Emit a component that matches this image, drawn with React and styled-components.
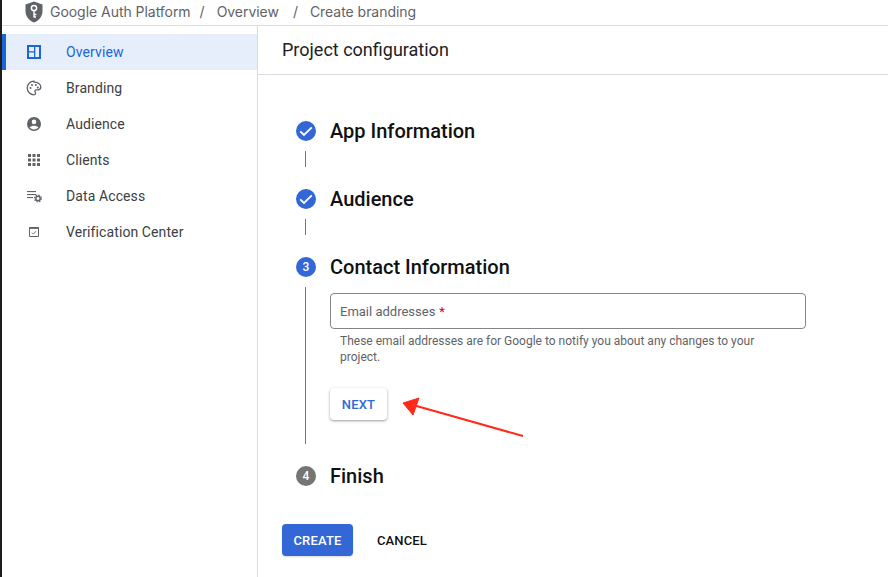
import React from "react";
import styled, { createGlobalStyle } from "styled-components";

const Global = createGlobalStyle`
  html, body { margin: 0; padding: 0; background: #fff; }
  body { font-family: Roboto, "Liberation Sans", sans-serif; color: #202124; }
`;

const Page = styled.div`
  position: relative;
  width: 888px;
  height: 577px;
  overflow: hidden;
  display: flex;
  flex-direction: column;
  background: #fff;
  border-left: 2px solid #1c1c1c;
  box-sizing: border-box;
`;

const TopBar = styled.header`
  height: 26px;
  flex: none;
  box-sizing: border-box;
  display: flex;
  align-items: center;
  padding-left: 23px;
  padding-bottom: 2px;
  border-bottom: 1px solid #dadce0;
  font-size: 14px;
  color: #5f6368;
  font-family: Inter, Roboto, sans-serif;
  letter-spacing: -0.04px;
`;

const Crumb = styled.span`
  margin-left: ${(p) => p.$gap}px;
  white-space: nowrap;
`;

const Body = styled.div`
  flex: 1;
  display: flex;
  min-height: 0;
`;

const Sidebar = styled.nav`
  width: 256px;
  flex: none;
  box-sizing: border-box;
  border-right: 1px solid #dadce0;
  padding-top: 8px;
`;

const NavItem = styled.div`
  height: 36px;
  display: flex;
  align-items: center;
  box-sizing: border-box;
  padding-left: ${(p) => (p.$active ? 20 : 24)}px;
  font-size: 14px;
  letter-spacing: 0.1px;
  color: ${(p) => (p.$active ? "#1a66d6" : "#3c4043")};
  background: ${(p) => (p.$active ? "#e6eefb" : "transparent")};
  border-left: ${(p) => (p.$active ? "4px solid #1a66d6" : "0")};
`;

const NavIcon = styled.span`
  width: 16px;
  height: 16px;
  margin-right: 24px;
  display: flex;
  align-items: center;
  justify-content: center;
  color: ${(p) => (p.$active ? "#1a66d6" : "#5f6368")};
`;

const Main = styled.main`
  flex: 1;
  min-width: 0;
`;

const MainHeader = styled.div`
  height: 49px;
  box-sizing: border-box;
  padding-left: 24px;
  padding-bottom: 1px;
  display: flex;
  align-items: center;
  border-bottom: 1px solid #dadce0;
  font-size: 18px;
  color: #202124;
`;

const Content = styled.div`
  padding: 46px 0 0 24px;
`;

const Stepper = styled.div`
  margin-left: 14px;
`;

const StepHead = styled.div`
  display: flex;
  align-items: center;
  height: 20px;
`;

const Badge = styled.span`
  width: 20px;
  height: 20px;
  border-radius: 50%;
  flex: none;
  display: flex;
  align-items: center;
  justify-content: center;
  background: ${(p) => (p.$muted ? "#757575" : "#3367d6")};
  color: #fff;
  font-size: 12px;
  font-weight: 500;
`;

const StepTitle = styled.h2`
  margin: 0 0 0 14px;
  font-size: 20px;
  font-weight: 500;
  line-height: 20px;
  color: #111;
  white-space: nowrap;
`;

const Track = styled.div`
  margin: 10px 0 22px 9px;
  padding: 0.02px 0 0 24px;
  border-left: 1px solid #757575;
  height: ${(p) => (p.$tall ? 157 : 16)}px;
  box-sizing: border-box;
`;

const Field = styled.div`
  margin-top: 6px;
  width: 476px;
  height: 36px;
  box-sizing: border-box;
  border: 1px solid #80868b;
  border-radius: 4px;
  padding-left: 9px;
  display: flex;
  align-items: center;
  font-size: 13px;
  letter-spacing: 0;
  color: #5f6368;
`;

const Required = styled.span`
  color: #d50000;
  margin-left: 4px;
`;

const Hint = styled.p`
  margin: 4px 0 0;
  padding-left: 10px;
  width: 440px;
  font-size: 12px;
  line-height: 16px;
  letter-spacing: 0;
  color: #5f6368;
`;

const NextButton = styled.div`
  margin-top: 23px;
  width: 57px;
  height: 32px;
  border-radius: 4px;
  display: flex;
  align-items: center;
  justify-content: center;
  font-size: 13px;
  font-weight: 500;
  letter-spacing: 0.2px;
  color: #3367d6;
  background: #fff;
  box-shadow: 0 1px 3px rgba(60, 64, 67, 0.35), 0 1px 2px rgba(60, 64, 67, 0.2);
`;

const Actions = styled.div`
  margin-top: 38px;
  display: flex;
  align-items: center;
  gap: 24px;
`;

const CreateButton = styled.div`
  width: 71px;
  height: 32px;
  border-radius: 4px;
  display: flex;
  align-items: center;
  justify-content: center;
  font-size: 13px;
  font-weight: 500;
  letter-spacing: 0.15px;
  color: #fff;
  background: #3367d6;
  box-shadow: 0 1px 2px rgba(60, 64, 67, 0.2);
`;

const CancelButton = styled.div`
  font-size: 13px;
  font-weight: 500;
  letter-spacing: 0.1px;
  color: #111;
`;

const Annotation = styled.svg`
  position: absolute;
  left: 393px;
  top: 390px;
`;

const Shield = () => (
  <svg width="18" height="22" viewBox="0 0 18 22">
    <path d="M9 0.5 L17.5 3.5 V10 C17.5 15.5 14 19.5 9 21.5 C4 19.5 0.5 15.5 0.5 10 V3.5 Z" fill="#5f6368" />
    <circle cx="9" cy="7" r="2.6" fill="none" stroke="#fff" strokeWidth="1.5" />
    <path d="M9 9.6 V16.5 M9 13.5 H11.4 M9 16 H11" stroke="#fff" strokeWidth="1.4" fill="none" />
  </svg>
);

const OverviewIcon = () => (
  <svg width="14" height="14" viewBox="0 0 14 14">
    <path fillRule="evenodd" fill="currentColor" d="M0 0H14V14H0Z M2 2V6.3H7V2Z M8.3 2V12H12V2Z M2 7.6V12H7V7.6Z" />
  </svg>
);

const PaletteIcon = () => (
  <svg width="16" height="16" viewBox="0 0 16 16">
    <path d="M8 1.2C4.2 1.2 1.2 4.2 1.2 8S4.2 14.8 8 14.8c1 0 1.6-.7 1.6-1.5 0-.9-.7-1.2-.7-2 0-.8.7-1.4 1.5-1.4h1.6c1.5 0 2.8-1.2 2.8-2.8 0-3.2-3-4.9-6.8-4.9Z" fill="none" stroke="currentColor" strokeWidth="1.3" />
    <circle cx="4.5" cy="8" r="1" fill="currentColor" />
    <circle cx="6" cy="5" r="1" fill="currentColor" />
    <circle cx="9.8" cy="5" r="1" fill="currentColor" />
    <circle cx="11.8" cy="7.4" r="1" fill="currentColor" />
  </svg>
);

const PersonIcon = () => (
  <svg width="16" height="16" viewBox="0 0 16 16">
    <path fillRule="evenodd" fill="currentColor" d="M8 1a7 7 0 1 0 0 14A7 7 0 0 0 8 1Zm0 2.6a2.3 2.3 0 1 1 0 4.6 2.3 2.3 0 0 1 0-4.6Zm0 9.8c-1.8 0-3.4-.8-4.4-2.1.9-1 2.8-1.6 4.4-1.6s3.5.6 4.4 1.6c-1 1.3-2.6 2.1-4.4 2.1Z" />
  </svg>
);

const GridIcon = () => (
  <svg width="14" height="14" viewBox="0 0 14 14" fill="currentColor">
    {[1, 5.5, 10].flatMap((y) =>
      [1, 5.5, 10].map((x) => <rect key={`${x}-${y}`} x={x} y={y} width="3" height="3" />)
    )}
  </svg>
);

const DataIcon = () => (
  <svg width="16" height="16" viewBox="0 0 16 16" fill="currentColor">
    <rect x="1" y="3" width="9" height="1.1" />
    <rect x="1" y="6" width="9" height="1.1" />
    <rect x="1" y="9" width="6" height="1.1" />
    <circle cx="12" cy="10.5" r="2.2" fill="none" stroke="currentColor" strokeWidth="1.5" />
    <circle cx="12" cy="10.5" r="3.4" fill="none" stroke="currentColor" strokeWidth="1.2" strokeDasharray="1.4 1.27" />
  </svg>
);

const VerifyIcon = () => (
  <svg width="12" height="12" viewBox="0 0 12 12" fill="none" stroke="currentColor">
    <path d="M1.5 1.5H10.5V10.5H1.5Z" strokeWidth="1" />
    <path d="M1 2.2H11" strokeWidth="1.4" />
    <path d="M4 6.6L5.4 8L8 5.2" strokeWidth="0.9" />
  </svg>
);

const Check = () => (
  <svg width="16" height="16" viewBox="0 0 16 16">
    <path d="M2.2 8.4L6 12L13.8 4.4" fill="none" stroke="#fff" strokeWidth="1.9" />
  </svg>
);

const navItems = [
  ["Overview", OverviewIcon, true],
  ["Branding", PaletteIcon],
  ["Audience", PersonIcon],
  ["Clients", GridIcon],
  ["Data Access", DataIcon],
  ["Verification Center", VerifyIcon],
];

export default function App() {
  return (
    <>
      <Global />
      <Page>
        <TopBar>
          <Shield />
          <Crumb $gap={7}>Google Auth Platform</Crumb>
          <Crumb $gap={9}>/</Crumb>
          <Crumb $gap={12}>Overview</Crumb>
          <Crumb $gap={14}>/</Crumb>
          <Crumb $gap={12}>Create branding</Crumb>
        </TopBar>
        <Body>
          <Sidebar>
            {navItems.map(([label, Icon, active]) => (
              <NavItem key={label} $active={active}>
                <NavIcon $active={active}>
                  <Icon />
                </NavIcon>
                {label}
              </NavItem>
            ))}
          </Sidebar>
          <Main>
            <MainHeader>Project configuration</MainHeader>
            <Content>
              <Stepper>
                <StepHead>
                  <Badge><Check /></Badge>
                  <StepTitle>App Information</StepTitle>
                </StepHead>
                <Track />
                <StepHead>
                  <Badge><Check /></Badge>
                  <StepTitle>Audience</StepTitle>
                </StepHead>
                <Track />
                <StepHead>
                  <Badge>3</Badge>
                  <StepTitle>Contact Information</StepTitle>
                </StepHead>
                <Track $tall>
                  <Field>
                    Email addresses<Required>*</Required>
                  </Field>
                  <Hint>
                    These email addresses are for Google to notify you about any changes to your project.
                  </Hint>
                  <NextButton>NEXT</NextButton>
                </Track>
                <StepHead>
                  <Badge $muted>4</Badge>
                  <StepTitle>Finish</StepTitle>
                </StepHead>
              </Stepper>
              <Actions>
                <CreateButton>CREATE</CreateButton>
                <CancelButton>CANCEL</CancelButton>
              </Actions>
            </Content>
          </Main>
        </Body>
        <Annotation width="135" height="50" viewBox="0 0 135 50">
          <path d="M128 46L18 15" stroke="#ff2a1a" strokeWidth="2" fill="none" />
          <path d="M8 13L24 8L18 25Z" fill="#ff2a1a" stroke="#ff2a1a" strokeLinejoin="round" />
        </Annotation>
      </Page>
    </>
  );
}
